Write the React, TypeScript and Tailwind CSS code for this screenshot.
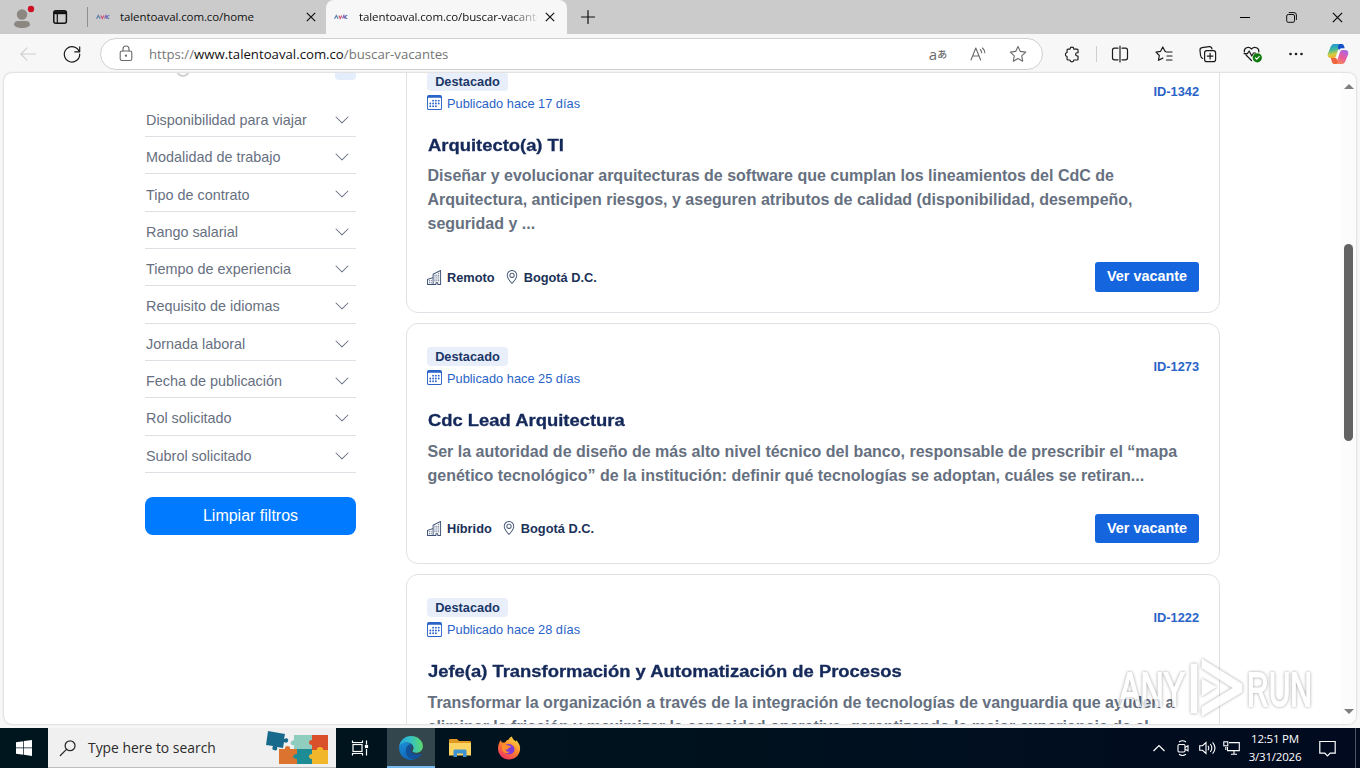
import type { ReactNode } from "react";
import { BsBuildings, BsCalendar3, BsChevronDown, BsGeoAlt } from "react-icons/bs";

const filters = [
  "Disponibilidad para viajar",
  "Modalidad de trabajo",
  "Tipo de contrato",
  "Rango salarial",
  "Tiempo de experiencia",
  "Requisito de idiomas",
  "Jornada laboral",
  "Fecha de publicación",
  "Rol solicitado",
  "Subrol solicitado",
];

interface Vacancy {
  id: string;
  days: number;
  title: string;
  lines: string[];
  mode: string;
}

const vacancies: Vacancy[] = [
  {
    id: "ID-1342",
    days: 17,
    title: "Arquitecto(a) TI",
    lines: [
      "Diseñar y evolucionar arquitecturas de software que cumplan los lineamientos del CdC de",
      "Arquitectura, anticipen riesgos, y aseguren atributos de calidad (disponibilidad, desempeño,",
      "seguridad y ...",
    ],
    mode: "Remoto",
  },
  {
    id: "ID-1273",
    days: 25,
    title: "Cdc Lead Arquitectura",
    lines: [
      "Ser la autoridad de diseño de más alto nivel técnico del banco, responsable de prescribir el “mapa",
      "genético tecnológico” de la institución: definir qué tecnologías se adoptan, cuáles se retiran...",
    ],
    mode: "Híbrido",
  },
  {
    id: "ID-1222",
    days: 28,
    title: "Jefe(a) Transformación y Automatización de Procesos",
    lines: [
      "Transformar la organización a través de la integración de tecnologías de vanguardia que ayuden a",
      "eliminar la fricción y maximizar la capacidad operativa, garantizando la mejor experiencia de el",
    ],
    mode: "Híbrido",
  },
];

interface IconProps {
  children: ReactNode;
  className?: string;
}

const Icon = ({ children, className = "size-5" }: IconProps) => (
  <svg
    viewBox="0 0 20 20"
    className={`shrink-0 ${className}`}
    fill="none"
    stroke="currentColor"
    strokeWidth="1.1"
    strokeLinecap="round"
    strokeLinejoin="round"
  >
    {children}
  </svg>
);

const ToolButton = ({ children }: { children: ReactNode }) => (
  <button className="flex h-8 w-11 shrink-0 items-center justify-center text-[#1b1b1b]">{children}</button>
);

const AvalIcon = () => (
  <svg viewBox="0 0 14 6" className="h-1.5 w-3.5 shrink-0" fill="none" strokeWidth="1.2">
    <path d="M.5 4.800 2.300 1.500 4.100 4.800" stroke="#5580aa" />
    <path d="m4.800 1.500 1.500 3L7.800 1.500" stroke="#d0566e" />
    <path d="m8.600 4.500 1.300-3 1 3" stroke="#8a5fb0" />
    <path d="M13.400 1.500h-1.300l-.8 1.500.8 1.500h1.300" stroke="#5b7fc0" />
  </svg>
);

const CloseIcon = ({ className }: { className?: string }) => (
  <svg viewBox="0 0 10 10" className={`shrink-0 ${className}`} fill="none" stroke="#111" strokeWidth="1.2">
    <path d="m.8.8 8.4 8.4M9.2.8.8 9.2" />
  </svg>
);

const CopilotIcon = () => (
  <svg viewBox="0 0 24 24" className="size-6 shrink-0">
    <defs>
      <linearGradient id="cpA" x1="0" y1="0" x2="0.2" y2="1">
        <stop offset="0" stopColor="#1b8fe8" />
        <stop offset=".45" stopColor="#3fb89a" />
        <stop offset=".8" stopColor="#d9cf3c" />
        <stop offset="1" stopColor="#f2a72e" />
      </linearGradient>
      <linearGradient id="cpB" x1="0.8" y1="0" x2="0.3" y2="1">
        <stop offset="0" stopColor="#a56be8" />
        <stop offset=".5" stopColor="#e8589f" />
        <stop offset="1" stopColor="#fb8a55" />
      </linearGradient>
    </defs>
    <path d="M15.500 2H8.200C5.800 2 4.700 4 3.800 7l-1.900 4.600C1 14 2 16 4.600 16h3.100c1.200 0 1.900-.8 2.300-2l2.800-8.500c.4-1.300 1.100-2 2.700-2z" fill="url(#cpA)" />
    <path d="M13.300 2h2.300c1.500 0 2 .8 2.400 2l.7 2.300h-3c-1.500 0-2.200.7-2.600 2L11.800 6c.4-1.500.3-3.300 1.500-4z" fill="#1550c8" />
    <path d="M8.500 22h7.300c2.400 0 3.500-2 4.400-5l1.900-4.600c.7-2.400-.3-4.400-3.100-4.400h-2.700c-1.200 0-1.900.8-2.300 2l-2.800 8.500c-.4 1.300-1.100 2-2.700 2z" fill="url(#cpB)" />
    <path d="M9.700 22H8.400c-1.500 0-2-.8-2.400-2l-1.200-4h4.400c1 0 1.500.5 1.800 1.600l.8 2.400c-.4 1.200-.9 2-2.100 2z" fill="#f0633c" />
  </svg>
);

const TabBar = () => (
  <div className="flex h-[34px] shrink-0 items-center bg-[#cbcbcb] text-[11.500px] text-[#111]">
    <svg viewBox="0 0 26 26" className="ml-2.5 size-[26px] shrink-0">
      <circle cx="12" cy="10.500" r="5.200" fill="#8d8782" />
      <path d="M4 20.500C4 18 6 17 8 17h8c2 0 4 1 4 3.500 0 2.300-4 3.500-8 3.500s-8-1.200-8-3.500z" fill="#8d8782" />
      <circle cx="21" cy="5" r="3.200" fill="#cf1126" />
    </svg>
    <svg viewBox="0 0 16 16" className="ml-4 size-4 shrink-0" fill="none" stroke="#111" strokeWidth="1.500">
      <rect x="1.800" y="1.800" width="12.600" height="12.400" rx="2" />
      <path d="M2 3.700h12.400" strokeWidth="3" />
      <path d="M5.300 4v10" strokeWidth="1.200" />
    </svg>
    <div className="ml-[19px] h-5 w-px bg-[#8f8f8f]" />
    <div className="flex h-full w-[238px] items-center pl-2">
      <AvalIcon />
      <span className="ml-2.5 w-[186px] whitespace-nowrap tracking-[-0.100px]">talentoaval.com.co/home</span>
      <CloseIcon className="size-[10px]" />
    </div>
    <div className="flex h-full w-[241px] items-center rounded-t-lg bg-[#f7f7f7] pl-2">
      <AvalIcon />
      <div className="ml-[11px] w-[178px] overflow-hidden whitespace-nowrap tracking-[-0.100px] [mask-image:linear-gradient(to_right,black_150px,transparent_182px)]">
        talentoaval.com.co/buscar-vacantes
      </div>
      <CloseIcon className="ml-2 size-[10px]" />
    </div>
    <Icon className="ml-[11px] size-5">
      <path d="M10 3.500v13M3.500 10h13" stroke="#111" strokeWidth="1.200" />
    </Icon>
    <div className="ml-auto flex items-center">
      <div className="flex w-[46px] justify-center">
        <div className="h-px w-2.5 bg-black" />
      </div>
      <div className="flex w-[46px] justify-center">
        <svg viewBox="0 0 11 11" className="size-[11px]" fill="none" stroke="#111">
          <rect x=".7" y="2.500" width="7.800" height="7.800" rx="1.500" />
          <path d="M2.800.6H8A2.400 2.400 0 0 1 10.400 3v5" />
        </svg>
      </div>
      <div className="flex w-[46px] justify-center">
        <CloseIcon className="size-[11px]" />
      </div>
    </div>
  </div>
);

const AddressBar = () => (
  <div className="flex h-[39px] shrink-0 items-center bg-[#f7f7f7] pt-px pl-1.5">
    <ToolButton>
      <Icon>
        <path d="M17.500 10H3M9 3.800 2.800 10 9 16.200" stroke="#cfcfcf" />
      </Icon>
    </ToolButton>
    <ToolButton>
      <Icon>
        <path d="M17.200 7.600A7.700 7.700 0 1 0 17.700 10M17.700 2.800v5h-5" strokeWidth="1.200" />
      </Icon>
    </ToolButton>
    <div className="ml-1.5 flex h-8 w-[943px] items-center rounded-full border border-[#d0d0d0] bg-white pl-[15px] text-[#6a6a6a]">
      <Icon className="size-5">
        <rect x="4.200" y="7" width="11.600" height="9.500" rx="1.800" />
        <path d="M7 7V5a3 3 0 0 1 6 0v2" />
        <circle cx="10" cy="11.700" r=".6" fill="currentColor" />
      </Icon>
      <span className="ml-[13px] pt-[1.500px] text-[13.200px] whitespace-nowrap text-[#767676]">
        https://<span className="text-[#111]">www.talentoaval.com.co</span>/buscar-vacantes
      </span>
      <div className="ml-auto flex items-center pr-1">
        <div className="flex w-10 items-center justify-center leading-none">
          <span className="text-[15px]">a</span>
          <span className="font-['Noto_Sans_CJK_JP',sans-serif] text-[10px] font-medium">あ</span>
        </div>
        <div className="flex w-10 justify-center">
          <Icon>
            <path d="M3 16 7.800 4l4.800 12M4.700 12h6.200M12.300 5.500c.9.900 1.300 1.900 1.300 3.200M14.500 4c1.500 1.400 2.300 3 2.300 4.800" />
          </Icon>
        </div>
        <div className="flex w-10 justify-center">
          <Icon>
            <path d="m10 2.500 2.300 4.900 5.400.7-4 3.700 1 5.400L10 14.600l-4.700 2.600 1-5.400-4-3.700 5.400-.7z" />
          </Icon>
        </div>
      </div>
    </div>
    <div className="ml-[7px] flex items-center">
      <ToolButton>
        <Icon className="size-[18px]">
          <path d="M7.800 4.500a2.100 2.100 0 0 1 4.200 0h3.600c.7 0 1.100.4 1.100 1.100v3h-.9a1.800 1.800 0 0 0 0 3.600h.9v3.400c0 .7-.4 1.100-1.100 1.100H12a2.100 2.100 0 0 1-4.200 0H5.600c-.7 0-1.100-.4-1.100-1.100v-2.800a2.300 2.300 0 0 1 0-4.500V5.600c0-.7.400-1.100 1.100-1.100z" strokeWidth="1.300" />
        </Icon>
      </ToolButton>
      <div className="mr-px ml-0.5 h-4 w-px bg-[#d0d0d0]" />
      <div className="flex items-center">
        <ToolButton>
          <Icon>
            <path d="M8 4.200H4.500c-1.200 0-2 .8-2 2v7.600c0 1.200.8 2 2 2H8M12 4.200h3.500c1.200 0 2 .8 2 2v7.600c0 1.200-.8 2-2 2H12M10 2v16" strokeWidth="1.200" />
          </Icon>
        </ToolButton>
        <ToolButton>
          <Icon>
            <path d="M12.300 8H18M13 12h5M12.500 16H18M11.500 7.300H11L8.800 3 6.600 7.300l-4.600.8 3.300 3.400-.8 4.800 4.300-2.200" strokeWidth="1.200" />
          </Icon>
        </ToolButton>
        <ToolButton>
          <Icon>
            <path d="M4.700 14.500C3 14 2.700 12.500 2.500 11L2 6.500C1.800 4.700 2.700 3.800 4 3.600l7-.9c1.700-.2 2.700.6 3 2.300" strokeWidth="1.200" />
            <rect x="6.600" y="6.600" width="11" height="11" rx="2.200" strokeWidth="1.200" />
            <path d="M12.100 9.300v5.600M9.300 12.100h5.600" strokeWidth="1.200" />
          </Icon>
        </ToolButton>
        <ToolButton>
          <Icon>
            <path d="M9.500 16.500 4 11M2.400 8C1.500 4 6.500 1.600 9.500 5c3-3.400 8-1 7.300 3M2 9.700h3.400L7.200 7l2.500 5 1.800-3h2" strokeWidth="1.200" />
            <circle cx="15.300" cy="13.800" r="4.600" fill="#107c10" stroke="none" />
            <path d="m13.400 13.900 1.400 1.300 2.400-2.600" stroke="white" strokeWidth="1.200" />
          </Icon>
        </ToolButton>
        <ToolButton>
          <Icon>
            <circle cx="4.500" cy="10" r="1.300" fill="currentColor" stroke="none" />
            <circle cx="10" cy="10" r="1.300" fill="currentColor" stroke="none" />
            <circle cx="15.500" cy="10" r="1.300" fill="currentColor" stroke="none" />
          </Icon>
        </ToolButton>
        <div className="ml-2">
          <CopilotIcon />
        </div>
      </div>
    </div>
  </div>
);

const Sidebar = () => (
  <aside className="w-[211px] shrink-0">
    <div className="flex h-[26.600px] items-start justify-between">
      <div className="-mt-2.5 ml-[31px] size-3.5 rounded-full border-2 border-[#d2d2d4]" />
      <div className="-mt-3 h-[19px] w-[21px] rounded bg-[#e3edfb]" />
    </div>
    {filters.map((label) => (
      <button
        key={label}
        className="flex h-[37.330px] w-full items-center justify-between border-b border-[#dcdfe3] pt-[5.800px] pr-1.5 pl-px text-left text-[14.400px] text-[#677080]"
      >
        {label}
        <BsChevronDown className="-mt-[2px] size-4" />
      </button>
    ))}
    <button className="mt-[24px] h-[38px] w-full rounded-lg bg-[#007aff] text-[16px] text-white">
      Limpiar filtros
    </button>
  </aside>
);

const VacancyCard = ({ vacancy }: { vacancy: Vacancy }) => (
  <article className="rounded-xl border border-[#dee2e6] px-5 pt-[23px] pb-[19.700px]">
    <div className="flex items-start justify-between">
      <div>
        <span className="flex h-[19px] w-[81px] items-center justify-center rounded bg-[#e8effb] text-[12.800px] font-bold text-[#1b3768]">
          Destacado
        </span>
        <div className="mt-0.5 flex h-[21px] items-center text-[12.800px] text-[#2a63c8]">
          <BsCalendar3 className="mr-[5px] -mt-px size-[15px]" />
          Publicado hace {vacancy.days} días
        </div>
      </div>
      <span className="mt-[10.300px] text-[12.800px] leading-[19px] font-bold text-[#2a63c8]">{vacancy.id}</span>
    </div>
    <h2 className="mt-5 ml-[0.800px] w-fit origin-left scale-x-[1.150] text-[16px] leading-6 font-bold whitespace-nowrap text-[#14295a] [-webkit-text-stroke:0.300px_#14295a]">
      {vacancy.title}
    </h2>
    <p className="mt-[6.800px] ml-[0.500px] text-[16px] leading-6 font-bold whitespace-nowrap text-[#667080]">
      {vacancy.lines.map((line) => (
        <span key={line} className="block">
          {line}
        </span>
      ))}
    </p>
    <div className="mt-[25.900px] flex items-center justify-between">
      <div className="flex items-center text-[12.800px] font-bold text-[#1b3158]">
        <BsBuildings className="mr-[5px] size-[15px] text-[#3c4f72]" />
        {vacancy.mode}
        <BsGeoAlt className="mr-[5px] ml-2.5 size-[14px] text-[#3c4f72]" />
        Bogotá D.C.
      </div>
      <button className="h-[29.600px] w-[104px] rounded-[3px] bg-[#1565de] text-[14.400px] font-bold text-white">
        Ver vacante
      </button>
    </div>
  </article>
);

const Scrollbar = () => (
  <div className="flex w-[15px] shrink-0 flex-col items-center bg-[#fcfcfc] pt-[11px] pb-2.5">
    <div className="size-0 border-x-[5px] border-b-[5px] border-x-transparent border-b-[#7f7f7f]" />
    <div className="mt-[155px] h-[197px] w-[9px] rounded-full bg-[#636363]" />
    <div className="mt-auto size-0 border-x-[5px] border-t-[5px] border-x-transparent border-t-[#7f7f7f]" />
  </div>
);

const Watermark = () => (
  <svg
    viewBox="0 0 200 66"
    className="absolute top-[655px] left-[1116px] h-[66px] w-[200px] opacity-75 [filter:drop-shadow(0_0_1.500px_rgba(0,0,0,0.500))]"
  >
    <g fill="#ffffff" stroke="#ffffff">
      <g fontFamily="'Liberation Sans', sans-serif" fontSize="49" strokeWidth="2">
        <text x="3" y="51" textLength="66" lengthAdjust="spacingAndGlyphs">
          ANY
        </text>
        <text x="131" y="51" textLength="65" lengthAdjust="spacingAndGlyphs">
          RUN
        </text>
      </g>
      <path
        d="M75 9h6v49h-6zM86 4l40 25v8L86 61v-9l31-19-31-20zM86 24l14 8-14 9z"
        strokeWidth=".8"
      />
    </g>
  </svg>
);

const PuzzleArt = () => (
  <svg viewBox="0 0 64 36" className="h-9 w-16 shrink-0">
    <path d="M2 1l17 3-1 5c3-2 5 0 4 2-.5 2-2 2-4 1l-1 6-6-1c1 3-1 4-3 3-2 0-2-2-1-4L0 15z" fill="#176a8c" />
    <path d="M28 5h18v15H28v-5c-4 1-5-4 0-5z" fill="#8fcdbf" />
    <path d="M46 5h16v15h-5c0 4-6 4-6 0h-5v-5c-4 0-4-5 0-5z" fill="#d9502a" />
    <path d="M13 19h6c-1-4 6-4 5 0h7v15H13z" fill="#dc7430" />
    <path d="M31 19h15v5c4-1 4 5 0 5v5H31v-5c-5 0-5-5 0-5z" fill="#1d8c94" />
    <path d="M46 20h5c-1-4 7-4 6 0h5v14H46v-5c-4 0-4-5 0-5z" fill="#f2b62b" />
  </svg>
);

const EdgeIcon = () => (
  <svg viewBox="0 0 24 24" className="size-[26px]">
    <defs>
      <linearGradient id="edTop" x1="0" y1=".6" x2="1" y2=".5">
        <stop offset="0" stopColor="#1ea4e0" />
        <stop offset=".5" stopColor="#34c0c8" />
        <stop offset="1" stopColor="#5cd968" />
      </linearGradient>
      <linearGradient id="edLow" x1="0" y1="0" x2=".4" y2="1">
        <stop offset="0" stopColor="#1a8fd8" />
        <stop offset="1" stopColor="#1266b8" />
      </linearGradient>
    </defs>
    <path d="M1 11.500C1.300 5.500 6 1 12 1c6.500 0 11 4.600 11 9.300 0 3.700-2.800 6-6.200 6-2.600 0-4-1-3.300-2.100.7-.8 1-1.600.8-2.700C13.900 8.800 11 7 8 7 4.500 7 2 9 1 11.500z" fill="url(#edTop)" />
    <path d="M1 12C1.500 9 4.500 7 8 7c1.500 0 3 .5 4 1.500-2.500.2-4.700 2.500-4.700 5.800 0 4.500 3.700 8 8 8-1 .5-2.200.7-3.500.7C5.500 23 1 18 1 12z" fill="url(#edLow)" />
    <path d="M12 8.500c-3 1-4.700 3.300-4.700 6 0 4.600 4.400 8.600 9.200 7.600 2.300-.9 4.300-2.500 5.500-4.400.3-.5-.2-.8-.7-.5-5 2.300-10.700-.7-9.300-5.200.5-1.200 1-1.500 1.700-1.500C13.400 9.500 12.800 9 12 8.500z" fill="#12519b" />
  </svg>
);

const FirefoxIcon = () => (
  <svg viewBox="0 0 24 24" className="size-6">
    <defs>
      <linearGradient id="ffA" x1=".8" y1="0" x2=".2" y2="1">
        <stop offset="0" stopColor="#ffe14a" />
        <stop offset=".45" stopColor="#ff8a2a" />
        <stop offset="1" stopColor="#ee2a66" />
      </linearGradient>
    </defs>
    <path d="M4 4c.1 1.200.4 2 1 2.600.8-.3 2-.3 3 0C9 4.800 10.200 4 11.500 3.800 12 2.500 13.500 1 15 .5c.2 2.300 2 3.300 3.500 5C19 5 19 4.500 19 4c3 3 4.500 5.700 4 10-.7 5.500-5.300 9.500-11 9.500S1 19 1 12.800C1 9.500 2 6 4 4z" fill="url(#ffA)" />
    <path d="M9 8.500c3-1.500 8 0 8.500 4.500.2 3-2.200 5.300-5 5.300S7 16 7 13.500z" fill="#7d3ad6" />
    <path d="M5 8.500c2-.8 4.500 0 5.500 1 1.500 0 2.800.3 3.300 1-.3 1.200-2.300 1.200-2.800 2.200-.4 1-1.600 1.100-2.800.8.800 1.800 2.800 2.600 4.600 2.200-1 1.500-3.500 2-5.500.8S4.500 12 5 8.500z" fill="#ff8f2c" />
  </svg>
);

const Taskbar = () => (
  <div className="flex h-10 shrink-0 items-center bg-linear-to-r from-[#00161e] via-[#00121e] to-[#010a1f] text-white">
    <div className="flex w-12 justify-center">
      <svg viewBox="0 0 16 16" className="size-4" fill="white">
        <path d="M0 2.300 7.300 1.200v6.400H0zM8 1.100 16 0v7.600H8zM0 8.300h7.300v6.400L0 13.700zM8 8.300h8V16l-8-1.200z" />
      </svg>
    </div>
    <div className="flex h-full w-72 items-center border-b border-[#bdbdbd] bg-[#f0f0f0] pl-[11px] text-[#2b2b2b]">
      <Icon className="size-[18px]">
        <circle cx="12.300" cy="7.500" r="5.500" strokeWidth="1.400" />
        <path d="M8.300 11.500 1.500 18.300" strokeWidth="1.400" />
      </Icon>
      <span className="ml-[11px] w-[178px] pt-0.5 text-[13.900px] whitespace-nowrap">Type here to search</span>
      <PuzzleArt />
    </div>
    <div className="flex w-[51px] items-center justify-center pr-[3px]">
      <svg viewBox="0 0 18 18" className="size-[18px]" fill="none" stroke="white" strokeWidth="1.200">
        <rect x="2" y="5.500" width="9" height="7" />
        <path d="M1.500 1.500v2h10v-2M1.500 16.500v-2h10v2M15.500 1.500v4M15.500 10v6.500" />
        <rect x="14.500" y="6.500" width="2" height="2" fill="white" />
      </svg>
    </div>
    <div className="flex h-full w-12 items-center justify-center border-b-2 border-[#76b9ed] bg-[#33454d] pt-0.5">
      <EdgeIcon />
    </div>
    <div className="flex w-12 justify-center pl-px">
      <svg viewBox="0 0 22 20" className="h-5 w-[22px]">
        <path d="M0 2.500C0 1.500.5 1 1.500 1H8l2 2h10.500c1 0 1.500.5 1.500 1.500V8H0z" fill="#e09a24" />
        <path d="M0 5h22v12.500H0z" fill="#fcd462" />
        <path d="M4.500 19v-6c0-1 .5-1.500 1.500-1.500h10c1 0 1.500.5 1.500 1.500v6h-3.500v-3.500H8V19z" fill="#3d94d1" />
      </svg>
    </div>
    <div className="flex w-12 justify-center pl-1">
      <FirefoxIcon />
    </div>
    <div className="ml-auto flex h-full items-center">
      <div className="flex w-6 justify-center">
        <svg viewBox="0 0 12 8" className="h-2 w-3" fill="none" stroke="white" strokeWidth="1.200">
          <path d="m.5 7 5.500-5.500L11.500 7" />
        </svg>
      </div>
      <div className="flex w-6 justify-center">
        <svg viewBox="0 0 12 16" className="h-4 w-3" fill="none" stroke="white" strokeWidth="1.100">
          <rect x="1" y="4.500" width="7" height="7.500" rx="1.200" />
          <path d="m8 7.500 3-1.700v5L8 9.200M2 2C4 .6 7 .6 9 2M2 14.300c2 1.400 5 1.400 7 0" />
        </svg>
      </div>
      <div className="flex w-6 justify-center">
        <svg viewBox="0 0 17 14" className="h-3.5 w-[17px]" fill="none" stroke="white" strokeWidth="1.100">
          <path d="M.7 4.700h2.800L7 1.500v11L3.500 9.300H.7zM9 4.700c1 1.500 1 3.100 0 4.600M11.300 3c2 2.600 2 5.400 0 8M13.600 1.300c3 3.600 3 7.800 0 11.400" />
        </svg>
      </div>
      <div className="flex w-6 justify-center">
        <svg viewBox="0 0 17 14" className="h-3.5 w-[17px]" fill="none" stroke="white" strokeWidth="1.100">
          <path d="M6 1.600h10.300v8H4.500V6M8 13.300h6M11 9.600v3.700M2.800 6v3" />
          <rect x=".8" y=".8" width="4" height="4" />
        </svg>
      </div>
      <div className="w-16 text-center text-[11.500px] leading-[18px] tracking-[-0.200px] whitespace-nowrap">
        <div>12:51 PM</div>
        <div>3/31/2026</div>
      </div>
      <div className="flex w-10 justify-center">
        <svg viewBox="0 0 17 17" className="size-[17px]" fill="none" stroke="white" strokeWidth="1.200">
          <path d="M.8 1.500h15.400v11.700h-5L8.500 16l-2.700-2.800h-5z" />
        </svg>
      </div>
      <div className="ml-2 h-full w-[5px] border-l border-[#4d5363]" />
    </div>
  </div>
);

export default function App() {
  return (
    <div className="relative flex h-[768px] w-[1360px] flex-col overflow-hidden bg-[#f7f7f7] font-['Open_Sans','Noto_Sans',sans-serif]">
      <TabBar />
      <AddressBar />
      <main className="mx-1 mb-1 flex h-[651px] shrink-0 overflow-hidden rounded-lg bg-white font-['Liberation_Sans',Arial,sans-serif] shadow-[0_0_2px_rgba(0,0,0,0.300)]">
        <div className="flex flex-1 items-start pl-[141px]">
          <Sidebar />
          <section className="-mt-[25.400px] ml-[50px] flex w-[814px] flex-col gap-[10.300px]">
            {vacancies.map((vacancy) => (
              <VacancyCard key={vacancy.id} vacancy={vacancy} />
            ))}
          </section>
        </div>
        <Scrollbar />
      </main>
      <Taskbar />
      <Watermark />
    </div>
  );
}
